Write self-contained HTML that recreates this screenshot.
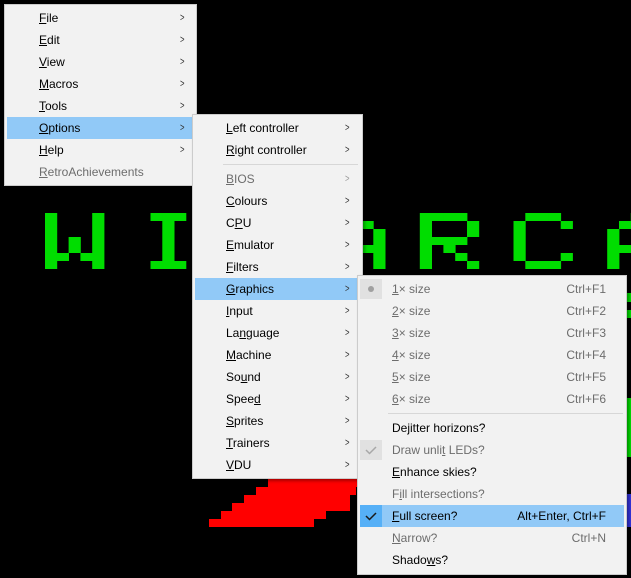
<!DOCTYPE html>
<html><head><meta charset="utf-8"><style>
*{margin:0;padding:0;box-sizing:border-box}
body{width:631px;height:578px;background:#000;position:relative;overflow:hidden;font-family:"Liberation Sans","DejaVu Sans",sans-serif;font-size:12px;color:#000}
.m{position:absolute;background:#f2f2f2;border:1px solid #cccccc;box-shadow:2px 2px 3px rgba(0,0,0,.35)}
.it{position:absolute;height:22px;line-height:22px;white-space:nowrap}
.hl{background:#91c9f7}
.d{color:#6d6d6d}
.ar{position:absolute;font-size:11px;line-height:22px;color:#333;transform:scaleX(.7)}
.ar.d{color:#9a9a9a}
.sc{position:absolute;right:20px;top:0}
.sep{position:absolute;height:1px;background:#d7d7d7}
.box{position:absolute;left:2px;top:1px;width:22px;height:20px;background:#e1e1e1}
u{text-decoration:underline;text-underline-offset:1px}
</style></head><body>
<svg width="631" height="578" style="position:absolute;left:0;top:0">
<g fill="#00dd00" id="letters"></g>
<rect x="627" y="293" width="4" height="9" fill="#00dd00"/>
<rect x="627" y="310" width="4" height="8" fill="#00dd00"/>
<rect x="627" y="398" width="4" height="59" fill="#00dd00"/>
<rect x="627" y="494" width="4" height="33" fill="#3333dd"/>
<g fill="#ff0000">
<rect x="268" y="479" width="90" height="8"/>
<rect x="256" y="487" width="100" height="8"/>
<rect x="244" y="495" width="106" height="8"/>
<rect x="232" y="503" width="118" height="8"/>
<rect x="221" y="511" width="105" height="8"/>
<rect x="209" y="519" width="105" height="8"/>
</g>
</svg>
<script>
(function(){
var L={W:["X...X","X...X","X...X","X.X.X","X.X.X","XX.XX","X...X"],
I:[".XXX.","..X..","..X..","..X..","..X..","..X..",".XXX."],
Z:["XXXXX","....X","...X.","..X..",".X...","X....","XXXXX"],
A:["..X..",".X.X.","X...X","X...X","XXXXX","X...X","X...X"],
R:["XXXX.","X...X","X...X","XXXX.","X.X..","X..X.","X...X"],
C:[".XXX.","X...X","X....","X....","X....","X...X",".XXX."]};
var w="WIZARCA",g=document.getElementById("letters"),s="";
for(var k=0;k<w.length;k++){var p=L[w[k]],x0=45+93.7*k;
for(var r=0;r<7;r++)for(var c=0;c<5;c++)if(p[r][c]=="X")
s+='<rect x="'+(x0+c*11.8).toFixed(1)+'" y="'+(213+r*8)+'" width="12.2" height="8"/>';}
g.innerHTML=s;})();
</script>

<!-- main menu -->
<div class="m" style="left:4px;top:4px;width:193px;height:182px">
<div class="it" style="left:34px;top:2px"><u>F</u>ile</div><div class="ar" style="left:174px;top:2px">&gt;</div>
<div class="it" style="left:34px;top:24px"><u>E</u>dit</div><div class="ar" style="left:174px;top:24px">&gt;</div>
<div class="it" style="left:34px;top:46px"><u>V</u>iew</div><div class="ar" style="left:174px;top:46px">&gt;</div>
<div class="it" style="left:34px;top:68px"><u>M</u>acros</div><div class="ar" style="left:174px;top:68px">&gt;</div>
<div class="it" style="left:34px;top:90px"><u>T</u>ools</div><div class="ar" style="left:174px;top:90px">&gt;</div>
<div class="it hl" style="left:2px;top:112px;width:186px"></div>
<div class="it" style="left:34px;top:112px"><u>O</u>ptions</div><div class="ar" style="left:174px;top:112px">&gt;</div>
<div class="it" style="left:34px;top:134px"><u>H</u>elp</div><div class="ar" style="left:174px;top:134px">&gt;</div>
<div class="it d" style="left:34px;top:156px"><u>R</u>etroAchievements</div>
</div>

<!-- options submenu -->
<div class="m" style="left:192px;top:114px;width:171px;height:365px">
<div class="it" style="left:33px;top:2px"><u>L</u>eft controller</div><div class="ar" style="left:151px;top:2px">&gt;</div>
<div class="it" style="left:33px;top:24px"><u>R</u>ight controller</div><div class="ar" style="left:151px;top:24px">&gt;</div>
<div class="sep" style="left:30px;top:49px;width:135px"></div>
<div class="it d" style="left:33px;top:53px"><u>B</u>IOS</div><div class="ar d" style="left:151px;top:53px">&gt;</div>
<div class="it" style="left:33px;top:75px"><u>C</u>olours</div><div class="ar" style="left:151px;top:75px">&gt;</div>
<div class="it" style="left:33px;top:97px">C<u>P</u>U</div><div class="ar" style="left:151px;top:97px">&gt;</div>
<div class="it" style="left:33px;top:119px"><u>E</u>mulator</div><div class="ar" style="left:151px;top:119px">&gt;</div>
<div class="it" style="left:33px;top:141px"><u>F</u>ilters</div><div class="ar" style="left:151px;top:141px">&gt;</div>
<div class="it hl" style="left:2px;top:163px;width:164px"></div>
<div class="it" style="left:33px;top:163px"><u>G</u>raphics</div><div class="ar" style="left:151px;top:163px">&gt;</div>
<div class="it" style="left:33px;top:185px"><u>I</u>nput</div><div class="ar" style="left:151px;top:185px">&gt;</div>
<div class="it" style="left:33px;top:207px">La<u>n</u>guage</div><div class="ar" style="left:151px;top:207px">&gt;</div>
<div class="it" style="left:33px;top:229px"><u>M</u>achine</div><div class="ar" style="left:151px;top:229px">&gt;</div>
<div class="it" style="left:33px;top:251px">So<u>u</u>nd</div><div class="ar" style="left:151px;top:251px">&gt;</div>
<div class="it" style="left:33px;top:273px">Spee<u>d</u></div><div class="ar" style="left:151px;top:273px">&gt;</div>
<div class="it" style="left:33px;top:295px"><u>S</u>prites</div><div class="ar" style="left:151px;top:295px">&gt;</div>
<div class="it" style="left:33px;top:317px"><u>T</u>rainers</div><div class="ar" style="left:151px;top:317px">&gt;</div>
<div class="it" style="left:33px;top:339px"><u>V</u>DU</div><div class="ar" style="left:151px;top:339px">&gt;</div>
</div>

<!-- graphics submenu -->
<div class="m" style="left:357px;top:275px;width:270px;height:300px">
<div class="it" style="left:0;top:2px;width:268px"><div class="box"><span style="position:absolute;left:8px;top:7px;width:6px;height:6px;border-radius:3px;background:#a0a0a0"></span></div><span class="d" style="position:absolute;left:34px"><u>1</u>× size</span><span class="d sc">Ctrl+F1</span></div>
<div class="it" style="left:0;top:24px;width:268px"><span class="d" style="position:absolute;left:34px"><u>2</u>× size</span><span class="d sc">Ctrl+F2</span></div>
<div class="it" style="left:0;top:46px;width:268px"><span class="d" style="position:absolute;left:34px"><u>3</u>× size</span><span class="d sc">Ctrl+F3</span></div>
<div class="it" style="left:0;top:68px;width:268px"><span class="d" style="position:absolute;left:34px"><u>4</u>× size</span><span class="d sc">Ctrl+F4</span></div>
<div class="it" style="left:0;top:90px;width:268px"><span class="d" style="position:absolute;left:34px"><u>5</u>× size</span><span class="d sc">Ctrl+F5</span></div>
<div class="it" style="left:0;top:112px;width:268px"><span class="d" style="position:absolute;left:34px"><u>6</u>× size</span><span class="d sc">Ctrl+F6</span></div>
<div class="sep" style="left:30px;top:137px;width:235px"></div>
<div class="it" style="left:34px;top:141px">De<u>j</u>itter horizons?</div>
<div class="it" style="left:0;top:163px;width:268px"><div class="box"><svg width="22" height="20" style="position:absolute;left:0;top:0"><path d="M6 10 L9.5 13.5 L16 7" fill="none" stroke="#a8a8a8" stroke-width="1.5"/></svg></div><span class="d" style="position:absolute;left:34px">Draw unli<u>t</u> LEDs?</span></div>
<div class="it" style="left:34px;top:185px"><u>E</u>nhance skies?</div>
<div class="it d" style="left:34px;top:207px">F<u>i</u>ll intersections?</div>
<div class="it hl" style="left:2px;top:229px;width:264px"><div style="position:absolute;left:0;top:0;width:22px;height:22px;background:#56b0f7"><svg width="22" height="22" style="position:absolute;left:0;top:0"><path d="M6 11 L9.5 14.5 L16 8" fill="none" stroke="#1a1a1a" stroke-width="1.5"/></svg></div><span style="position:absolute;left:32px"><u>F</u>ull screen?</span><span class="sc" style="right:18px">Alt+Enter, Ctrl+F</span></div>
<div class="it" style="left:0;top:251px;width:268px"><span class="d" style="position:absolute;left:34px"><u>N</u>arrow?</span><span class="d sc">Ctrl+N</span></div>
<div class="it" style="left:34px;top:273px">Shado<u>w</u>s?</div>
</div>
</body></html>
